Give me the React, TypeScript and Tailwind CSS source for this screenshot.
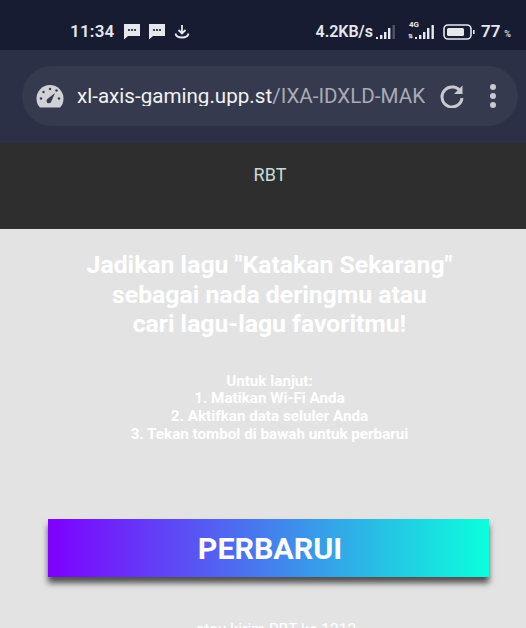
import React from 'react';

const font = { fontFamily: 'Roboto, sans-serif' };

const SmsIcon: React.FC = () => (
  <svg width="18" height="17" viewBox="0 0 18 17" className="block">
    <path d="M1 1h16v12H5l-4 3.500z" fill="#e6e8ee" />
    <circle cx="6" cy="7" r="1.100" fill="#181c33" />
    <circle cx="9" cy="7" r="1.100" fill="#181c33" />
    <circle cx="12" cy="7" r="1.100" fill="#181c33" />
  </svg>
);

const Bars: React.FC<{ dim?: boolean }> = ({ dim }) => (
  <svg width="20" height="16" viewBox="0 0 20 16" className="block">
    <rect x="0" y="13" width="2" height="2" fill="#e6e8ee" />
    <rect x="4" y="11" width="2.400" height="4" fill="#e6e8ee" />
    <rect x="8" y="8" width="2.400" height="7" fill="#e6e8ee" />
    <rect x="12" y="4" width="2.400" height="11" fill="#e6e8ee" />
    <rect x="16.500" y="1" width="2.400" height="14" fill={dim ? '#50546a' : '#e6e8ee'} />
  </svg>
);

const App: React.FC = () => {
  return (
    <div className="h-[628px] w-[526px] overflow-hidden flex flex-col bg-[#e3e3e3]" style={font}>
      {/* status bar */}
      <div className="h-[50px] shrink-0 bg-[#181c33] flex items-center justify-between pl-[70px] pr-[15px] pt-[13px] text-[#e6e8ee]">
        <div className="flex items-center">
          <span className="text-[17px] font-semibold leading-none tracking-[0.2px]">11:34</span>
          <span className="ml-[9px]"><SmsIcon /></span>
          <span className="ml-[7px]"><SmsIcon /></span>
          <svg width="16" height="15" viewBox="0 0 16 15" className="block ml-[8px]" fill="none" stroke="#e6e8ee" strokeWidth="1.800">
            <path d="M8 1v7.500M4.500 6 8 9.500 11.500 6" />
            <path d="M1.500 9.500c.5 3 3 4 6.500 4s6-1 6.500-4" />
          </svg>
        </div>
        <div className="flex items-center">
          <span className="text-[16px] font-semibold leading-none">4.2KB/s</span>
          <span className="ml-[3px]"><Bars dim /></span>
          <div className="relative ml-[12px] pl-[7px]">
            <span className="absolute left-[1px] top-[-3px] text-[8px] font-bold leading-none">4G</span>
            <span className="absolute left-0 bottom-[1px] text-[6px] font-bold leading-none">⇅</span>
            <Bars />
          </div>
          <svg width="32" height="16" viewBox="0 0 32 16" className="block ml-[8px]">
            <rect x="1" y="1" width="27" height="14" rx="4" fill="none" stroke="#e6e8ee" strokeWidth="1.600" />
            <rect x="4" y="4" width="17" height="8" rx="1.500" fill="#e6e8ee" />
            <rect x="30" y="6" width="1.600" height="4" fill="#e6e8ee" />
          </svg>
          <span className="ml-[6px] text-[17px] font-semibold leading-none">77</span>
          <span className="ml-[4px] text-[9px] font-medium leading-none pt-[5px]">%</span>
        </div>
      </div>

      {/* browser toolbar */}
      <div className="h-[93px] shrink-0 bg-[#2b3047] pl-[22px] pr-[8px] pt-[16px]">
        <div className="h-[60px] rounded-full bg-[#353a4e] flex items-center pl-[14px] pr-[14px]">
          <svg width="28" height="24" viewBox="0 0 28 24" className="block shrink-0">
            <path d="M4 23.500C1.500 21 .5 18 .5 14.500.5 7 6.500 1 14 1s13.500 6 13.500 13.500c0 3.500-1 6.500-3.500 9z" fill="#d0d1d6" />
            <path d="M12 14.500 19 9l-3.500 8a2.500 2.500 0 1 1-3.500-2.500z" fill="#353a4e" />
            <circle cx="14" cy="5" r="1.200" fill="#353a4e" />
            <circle cx="7.500" cy="8" r="1.200" fill="#353a4e" />
            <circle cx="20.500" cy="6.500" r="1.200" fill="#353a4e" />
            <circle cx="5" cy="14.500" r="1.200" fill="#353a4e" />
            <circle cx="23" cy="14.500" r="1.200" fill="#353a4e" />
          </svg>
          <div className="ml-[13px] w-[348px] overflow-hidden whitespace-nowrap text-[20.600px] leading-none">
            <span className="text-[#f1f2f4]">xl-axis-gaming.upp.st</span>
            <span className="text-[#a9acb6]">/IXA-IDXLD-MAKAN</span>
          </div>
          <svg width="24" height="24" viewBox="0 0 24 24" className="block shrink-0 ml-[15px]" fill="none" stroke="#c9cad0" strokeWidth="3">
            <path d="M21 8.500A10 10 0 1 0 22 14" />
            <path d="M22.500 1.500v8.500H14" fill="#c9cad0" stroke="none" />
          </svg>
          <div className="ml-[26px] flex flex-col gap-[3px] shrink-0">
            <span className="w-[6px] h-[6px] rounded-full bg-[#c9cad0]" />
            <span className="w-[6px] h-[6px] rounded-full bg-[#c9cad0]" />
            <span className="w-[6px] h-[6px] rounded-full bg-[#c9cad0]" />
          </div>
        </div>
      </div>

      {/* dark header */}
      <div className="h-[86px] shrink-0 bg-[#2e2e2e] flex justify-center pt-[21px] pl-[14px]">
        <span className="text-[18px] leading-[21px] text-[#c5dcda]">RBT</span>
      </div>

      {/* page body */}
      <div className="flex flex-col items-center text-center pl-[13px]">
        <h1 className="mt-[21px] text-[24.750px] font-bold leading-[29.500px] text-white whitespace-nowrap">
          Jadikan lagu "Katakan Sekarang"
          <br />
          sebagai nada deringmu atau
          <br />
          cari lagu-lagu favoritmu!
        </h1>
        <p className="mt-[34px] text-[15.200px] font-bold leading-[17.700px] text-white whitespace-nowrap">
          Untuk lanjut:
          <br />
          1. Matikan Wi-Fi Anda
          <br />
          2. Aktifkan data seluler Anda
          <br />
          3. Tekan tombol di bawah untuk perbarui
        </p>
        <button className="self-start ml-[35px] mt-[76px] w-[441px] h-[58px] shrink-0 pl-[3px] bg-linear-to-r/srgb from-[#7f00ff] to-[#0affdc] text-[30.400px] font-bold text-white shadow-[0_6px_6px_rgba(0,0,0,0.65)]">
          PERBARUI
        </button>
        <p className="mt-[44px] ml-[13px] text-[15.700px] leading-[17px] text-white whitespace-nowrap">atau kirim RBT ke 1212</p>
      </div>
    </div>
  );
};

export default App;
